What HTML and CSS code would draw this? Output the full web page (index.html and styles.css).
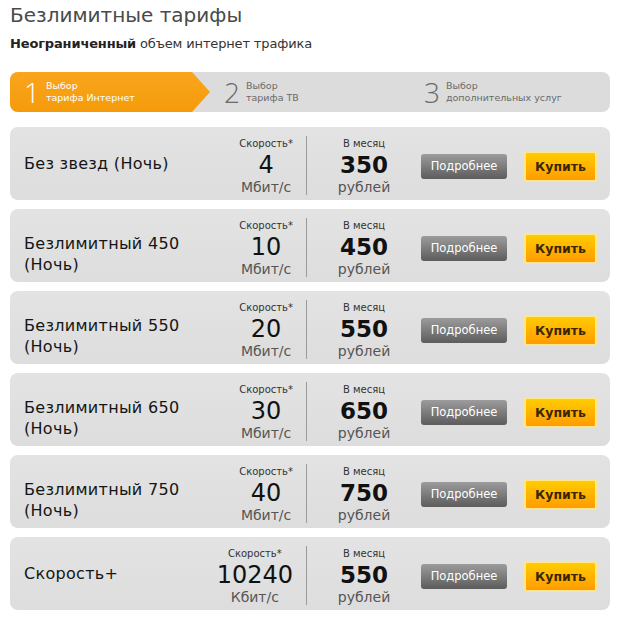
FILE: index.html
```html
<!DOCTYPE html>
<html lang="ru">
<head>
<meta charset="utf-8">
<title>Безлимитные тарифы</title>
<link rel="stylesheet" href="styles.css">
</head>
<body>
<div class="page">
  <h1 class="title">Безлимитные тарифы</h1>
  <p class="subtitle"><b>Неограниченный</b> объем интернет трафика</p>

  <div class="steps">
    <div class="step step--active">
      <span class="step-num">1</span>
      <span class="step-label">Выбор<br>тарифа Интернет</span>
    </div>
    <div class="step">
      <span class="step-num">2</span>
      <span class="step-label">Выбор<br>тарифа ТВ</span>
    </div>
    <div class="step">
      <span class="step-num">3</span>
      <span class="step-label">Выбор<br>дополнительных услуг</span>
    </div>
  </div>

  <div class="tariffs">
    <div class="tariff">
      <div class="name">Без звезд (Ночь)</div>
      <div class="speed"><div class="label">Скорость*</div><div class="value">4</div><div class="unit">Мбит/с</div></div>
      <div class="price"><div class="label">В месяц</div><div class="value">350</div><div class="unit">рублей</div></div>
      <a class="btn-more">Подробнее</a>
      <a class="btn-buy">Купить</a>
    </div>
    <div class="tariff">
      <div class="name name--two">Безлимитный 450<br>(Ночь)</div>
      <div class="speed"><div class="label">Скорость*</div><div class="value">10</div><div class="unit">Мбит/с</div></div>
      <div class="price"><div class="label">В месяц</div><div class="value">450</div><div class="unit">рублей</div></div>
      <a class="btn-more">Подробнее</a>
      <a class="btn-buy">Купить</a>
    </div>
    <div class="tariff">
      <div class="name name--two">Безлимитный 550<br>(Ночь)</div>
      <div class="speed"><div class="label">Скорость*</div><div class="value">20</div><div class="unit">Мбит/с</div></div>
      <div class="price"><div class="label">В месяц</div><div class="value">550</div><div class="unit">рублей</div></div>
      <a class="btn-more">Подробнее</a>
      <a class="btn-buy">Купить</a>
    </div>
    <div class="tariff">
      <div class="name name--two">Безлимитный 650<br>(Ночь)</div>
      <div class="speed"><div class="label">Скорость*</div><div class="value">30</div><div class="unit">Мбит/с</div></div>
      <div class="price"><div class="label">В месяц</div><div class="value">650</div><div class="unit">рублей</div></div>
      <a class="btn-more">Подробнее</a>
      <a class="btn-buy">Купить</a>
    </div>
    <div class="tariff">
      <div class="name name--two">Безлимитный 750<br>(Ночь)</div>
      <div class="speed"><div class="label">Скорость*</div><div class="value">40</div><div class="unit">Мбит/с</div></div>
      <div class="price"><div class="label">В месяц</div><div class="value">750</div><div class="unit">рублей</div></div>
      <a class="btn-more">Подробнее</a>
      <a class="btn-buy">Купить</a>
    </div>
    <div class="tariff">
      <div class="name">Скорость+</div>
      <div class="speed"><div class="label">Скорость*</div><div class="value">10240</div><div class="unit">Кбит/с</div></div>
      <div class="price"><div class="label">В месяц</div><div class="value">550</div><div class="unit">рублей</div></div>
      <a class="btn-more">Подробнее</a>
      <a class="btn-buy">Купить</a>
    </div>
  </div>
</div>
</body>
</html>
```

FILE: styles.css
```css
html, body {
  margin: 0;
  padding: 0;
  background: #ffffff;
}

body {
  font-family: "DejaVu Sans", Verdana, sans-serif;
  color: #222;
}

.page {
  width: 600px;
  padding: 3px 12px 0 10px;
}

.title {
  margin: 0;
  font-size: 20px;
  line-height: 24px;
  font-weight: normal;
  color: #4a4a4a;
}

.subtitle {
  margin: 9px 0 0;
  font-size: 13px;
  line-height: 16px;
  letter-spacing: -0.15px;
  color: #333;
}

.subtitle b {
  color: #222;
}

.steps {
  margin-top: 20px;
  height: 40px;
  display: flex;
  background: #dcdcdc;
  border-radius: 8px;
  overflow: hidden;
}

.step {
  width: 200px;
  box-sizing: border-box;
  padding-left: 14px;
  display: flex;
  align-items: center;
  gap: 6px;
  color: #6a6a6a;
}

.step--active {
  color: #ffffff;
  background: linear-gradient(#f9a51d, #f59b0b);
  clip-path: polygon(0 0, 182px 0, 200px 50%, 182px 100%, 0 100%);
}

.step-num {
  font-family: "Open Sans", "DejaVu Sans", sans-serif;
  font-weight: 300;
  font-size: 28px;
  line-height: 30px;
}

.step-label {
  font-size: 9.5px;
  line-height: 12px;
}

.tariffs {
  margin-top: 15px;
  display: flex;
  flex-direction: column;
  gap: 9px;
}

.tariff {
  height: 73px;
  display: flex;
  align-items: center;
  padding: 0 13px 0 14px;
  background: linear-gradient(#e3e3e3, #dddddd);
  border-radius: 8px;
}

.name {
  flex: 1;
  font-size: 16px;
  line-height: 21px;
  letter-spacing: 0.3px;
  color: #151515;
}

.name--two {
  margin-top: 17px;
}

.speed,
.price {
  text-align: center;
  padding-top: 2px;
  margin-top: 4px;
}

.speed {
  padding-right: 13px;
  border-right: 1px solid #9a9a9a;
  padding-bottom: 0;
}

.price {
  width: 114px;
}

.label {
  font-size: 10px;
  line-height: 12px;
  color: #333;
}

.value {
  margin-top: 3px;
  font-size: 24px;
  line-height: 24px;
  color: #111;
}

.price .value {
  font-size: 23px;
  font-weight: bold;
}

.unit {
  margin-top: 2px;
  font-size: 14px;
  line-height: 16px;
  color: #555;
}

.btn-more {
  margin-top: 6px;
  width: 86px;
  height: 25px;
  line-height: 25px;
  text-align: center;
  font-size: 11.5px;
  color: #ffffff;
  background: linear-gradient(#9c9c9c, #5c5c5c);
  border-radius: 3px;
}

.btn-buy {
  margin-top: 6px;
  margin-left: 17px;
  width: 69px;
  height: 27px;
  line-height: 27px;
  text-align: center;
  font-size: 12.5px;
  font-weight: bold;
  color: #3a2600;
  background: linear-gradient(#ffcc00, #ff9c00);
  border: 2px solid #ffe68c;
  border-radius: 3px;
}
```
